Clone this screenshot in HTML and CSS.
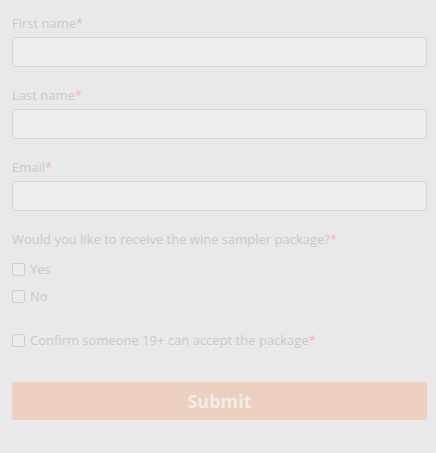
FILE: index.html
```html
<!DOCTYPE html>
<html lang="en">
<head>
    <meta charset="UTF-8">
    <meta name="viewport" content="width=device-width, initial-scale=1.0">
    <title>Wine Sampler Signup</title>
    <link rel="stylesheet" href="styles.css">
</head>
<body>
    <!-- Signup form (disabled look) -->
    <form class="signup">
        <div class="field">
            <label for="firstName">First name<span class="req">*</span></label>
            <input type="text" id="firstName">
        </div>

        <div class="field">
            <label for="lastName">Last name<span class="req">*</span></label>
            <input type="text" id="lastName">
        </div>

        <div class="field">
            <label for="email">Email<span class="req">*</span></label>
            <input type="text" id="email">
        </div>

        <div class="question">
            <p class="question-title">Would you like to receive the wine sampler package?<span class="req">*</span></p>
            <label class="check"><span class="box"></span>Yes</label>
            <label class="check"><span class="box"></span>No</label>
        </div>

        <div class="confirm">
            <label class="check"><span class="box"></span>Confirm someone 19+ can accept the package<span class="req">*</span></label>
        </div>

        <button type="button" class="submit">Submit</button>
    </form>
</body>
</html>
```

FILE: styles.css
```css
/* Form styling */
body {
    margin: 0;
    padding: 0;
    background-color: #e9e9e9;
    font-family: "Open Sans", Arial, sans-serif;
    font-size: 13px;
    color: #c8c8c8;
}

.signup {
    padding: 14px 9px 0 12px;
}

.field {
    margin-bottom: 19px;
}

.field label {
    display: block;
    line-height: 18px;
    margin-bottom: 5px;
}

.req {
    color: #f1b3b7;
}

.field input {
    display: block;
    box-sizing: border-box;
    width: 100%;
    height: 30px;
    margin: 0;
    border: 1px solid #d5d6d5;
    border-radius: 3px;
    background-color: #eceeed;
}

.question-title {
    margin: 0 0 12px;
    line-height: 18px;
}

.check {
    display: flex;
    align-items: center;
    line-height: 18px;
    margin-bottom: 9px;
}

.check:last-child {
    margin-bottom: 0;
}

.box {
    width: 11px;
    height: 11px;
    border: 1px solid #cdcdcd;
    border-radius: 2px;
    background-color: #ececec;
    margin-right: 5px;
}

.confirm {
    margin-top: 26px;
}

.submit {
    display: block;
    width: 100%;
    height: 38px;
    margin-top: 33px;
    border: none;
    border-radius: 3px;
    background-color: #eccfbe;
    color: #f1ede9;
    font-family: "Open Sans", Arial, sans-serif;
    font-size: 18px;
    font-weight: 700;
}
```
